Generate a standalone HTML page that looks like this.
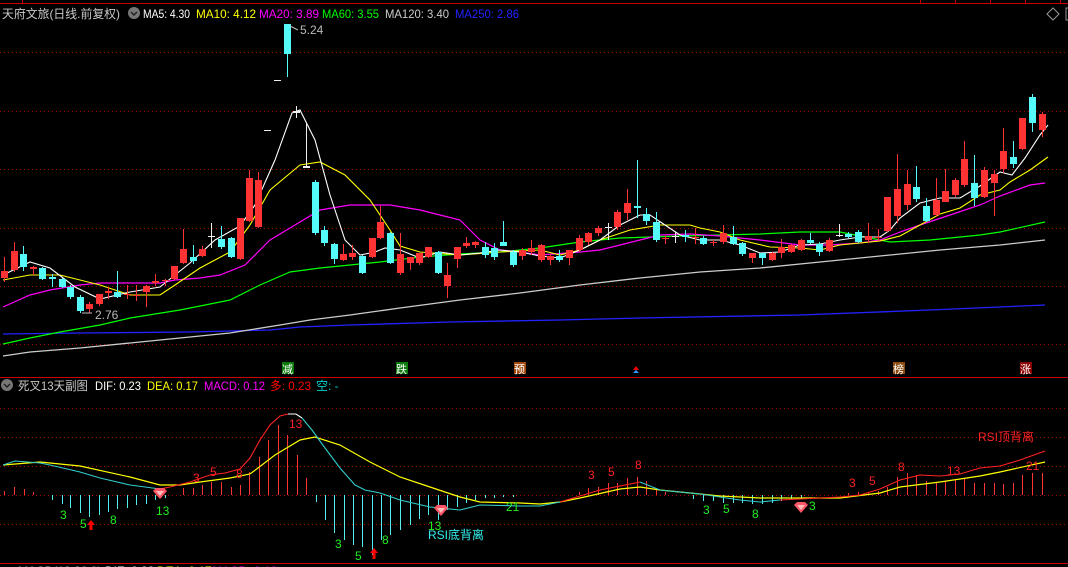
<!DOCTYPE html>
<html><head><meta charset="utf-8"><style>
html,body{margin:0;padding:0;background:#000;width:1068px;height:567px;overflow:hidden}
svg{display:block}
text{font-family:"Liberation Sans","Noto Sans CJK SC",sans-serif;font-size:12px}
</style></head><body>
<svg id="s" width="1068" height="567" viewBox="0 0 1068 567" xmlns="http://www.w3.org/2000/svg">
<rect width="1068" height="567" fill="#000"/>
<g id="grid" stroke="#a00" stroke-width="1" stroke-dasharray="1,3">
<line x1="0" y1="52.5" x2="1068" y2="52.5"/><line x1="0" y1="111.5" x2="1068" y2="111.5"/>
<line x1="0" y1="169.5" x2="1068" y2="169.5"/><line x1="0" y1="228.5" x2="1068" y2="228.5"/>
<line x1="0" y1="286.5" x2="1068" y2="286.5"/><line x1="0" y1="344.5" x2="1068" y2="344.5"/>
<line x1="0" y1="408.5" x2="1068" y2="408.5"/><line x1="0" y1="437.5" x2="1068" y2="437.5"/>
<line x1="0" y1="466.5" x2="1068" y2="466.5"/><line x1="0" y1="495.5" x2="1068" y2="495.5"/>
<line x1="0" y1="524.5" x2="1068" y2="524.5"/>
</g>
<line x1="0" y1="3.5" x2="1068" y2="3.5" stroke="#c00"/>
<g stroke="#c00"><line x1="22.5" y1="0" x2="22.5" y2="3"/><line x1="920.5" y1="0" x2="920.5" y2="3"/><line x1="955.5" y1="0" x2="955.5" y2="3"/><line x1="990.5" y1="0" x2="990.5" y2="3"/><line x1="1025.5" y1="0" x2="1025.5" y2="3"/><line x1="1060.5" y1="0" x2="1060.5" y2="3"/></g>
<line x1="0" y1="377.5" x2="1068" y2="377.5" stroke="#c00"/>
<line x1="0" y1="563.5" x2="1068" y2="563.5" stroke="#c00"/>
<g id="ma"></g>
<g id="candles"></g>
<g id="hist"></g>
<g id="macd"></g>

<text x="2" y="18" fill="#c8c8c8" textLength="118" lengthAdjust="spacingAndGlyphs">天府文旅(日线.前复权)</text>
<circle cx="134" cy="13" r="6" fill="#777"/><path d="M131 12 l3 3 l3 -3" stroke="#222" stroke-width="1.5" fill="none"/>
<text x="143" y="18" fill="#fff" textLength="47" lengthAdjust="spacingAndGlyphs">MA5: 4.30</text>
<text x="196" y="18" fill="#ff0" textLength="60" lengthAdjust="spacingAndGlyphs">MA10: 4.12</text>
<text x="259" y="18" fill="#f0f" textLength="60" lengthAdjust="spacingAndGlyphs">MA20: 3.89</text>
<text x="322" y="18" fill="#0f0" textLength="57" lengthAdjust="spacingAndGlyphs">MA60: 3.55</text>
<text x="385" y="18" fill="#ccc" textLength="64" lengthAdjust="spacingAndGlyphs">MA120: 3.40</text>
<text x="455" y="18" fill="#22f" textLength="64" lengthAdjust="spacingAndGlyphs">MA250: 2.86</text>
<path d="M1053 8 l6 6 l-6 6 l-6 -6z" fill="none" stroke="#999"/>
<rect x="1066" y="8" width="6" height="12" fill="none" stroke="#999"/>

<text x="300" y="34" fill="#bbb">5.24</text><path d="M290 26 l8 4" stroke="#bbb"/>
<text x="95" y="319" fill="#bbb">2.76</text><path d="M82 313 h10" stroke="#bbb"/>

<rect x="282" y="362" width="12" height="12" fill="#0a7a0a"/><text x="282" y="373" fill="#fff" style="font-size:11px">减</text>
<rect x="396" y="362" width="12" height="12" fill="#0a7a0a"/><text x="396" y="373" fill="#fff" style="font-size:11px">跌</text>
<rect x="514" y="362" width="12" height="12" fill="#a04a10"/><text x="514" y="373" fill="#fff" style="font-size:11px">预</text>
<path d="M636 366 l3 4 h-6z" fill="#e00"/><path d="M636 370 l3 3 h-6z" fill="#39f"/>
<rect x="893" y="362" width="12" height="12" fill="#8b4a10"/><text x="893" y="373" fill="#fff" style="font-size:11px">榜</text>
<rect x="1020" y="362" width="12" height="12" fill="#8b0000"/><text x="1020" y="373" fill="#fff" style="font-size:11px">涨</text>

<circle cx="7" cy="385" r="6" fill="#777"/><path d="M4 384 l3 3 l3 -3" stroke="#222" stroke-width="1.5" fill="none"/>
<text x="18" y="390" fill="#c8c8c8" textLength="70" lengthAdjust="spacingAndGlyphs">死叉13天副图</text>
<text x="95" y="390" fill="#fff" textLength="46" lengthAdjust="spacingAndGlyphs">DIF: 0.23</text>
<text x="147" y="390" fill="#ff0" textLength="51" lengthAdjust="spacingAndGlyphs">DEA: 0.17</text>
<text x="204" y="390" fill="#f0f" textLength="61" lengthAdjust="spacingAndGlyphs">MACD: 0.12</text>
<text x="270" y="390" fill="#f00" textLength="41" lengthAdjust="spacingAndGlyphs">多: 0.23</text>
<text x="316" y="390" fill="#0cc">空: -</text>

<g fill="#2e2" style="font-size:12px">
<text x="60" y="519">3</text><text x="80" y="528">5</text><text x="110" y="524">8</text><text x="156" y="515">13</text>
<text x="335" y="548">3</text><text x="355" y="560">5</text><text x="382" y="544">8</text><text x="428" y="530">13</text><text x="506" y="511">21</text>
<text x="703" y="514">3</text><text x="723" y="513">5</text><text x="752" y="518">8</text><text x="809" y="510">3</text>
</g>
<g fill="#f22" style="font-size:12px">
<text x="193" y="482">3</text><text x="210" y="476">5</text><text x="236" y="478">8</text><text x="289" y="428">13</text>
<text x="588" y="479">3</text><text x="608" y="476">5</text><text x="635" y="469">8</text>
<text x="849" y="487">3</text><text x="869" y="485">5</text><text x="898" y="471">8</text><text x="947" y="475">13</text><text x="1026" y="470">21</text>
<text x="978" y="441">RSI顶背离</text>
</g>
<text x="428" y="539" fill="#3ee">RSI底背离</text>
<path d="M91 520 l4 5 h-2.5 v5 h-3 v-5 h-2.5z" fill="#f00"/>
<path d="M374 548 l4 5 h-2.5 v6 h-3 v-6 h-2.5z" fill="#f00"/>
<g id="gems"></g>
<text x="18" y="575" fill="#bbb">MACD(12,26,9)</text><text x="105" y="575" fill="#fff">DIF: 0.23</text><text x="157" y="575" fill="#ff0">DEA: 0.17</text><text x="212" y="575" fill="#f0f">MACD: 0.12</text>
</svg>
<script>
var NS="http://www.w3.org/2000/svg";
function el(p,t,a){var e=document.createElementNS(NS,t);for(var k in a)e.setAttribute(k,a[k]);document.getElementById(p).appendChild(e);return e;}
function pl(p,pts,c,w){var s=[];for(var i=0;i<pts.length;i+=2)s.push(pts[i]+","+pts[i+1]);el(p,"polyline",{points:s.join(" "),fill:"none",stroke:c,"stroke-width":w||1});}
pl("ma",[3,334,80,333,190,332,270,330,300,327,350,325,450,322,560,320,640,318,800,315,930,310,1045,305],"#22f",1.3);
pl("ma",[3,356,30,352,80,348,130,343,180,338,230,333,280,325,310,320,350,315,400,308,460,300,520,293,580,285,640,278,700,272,760,268,820,262,880,256,940,250,1000,245,1045,240],"#ccc",1.3);
pl("ma",[3,344,30,338,60,332,100,325,130,318,180,310,230,300,260,285,290,272,320,268,380,262,420,257,460,254,500,252,540,248,580,242,620,238,680,236,760,234,800,232,840,232,870,238,890,242,930,240,980,235,1000,232,1045,222],"#0f0",1.2);
pl("ma",[3,307,30,295,50,290,80,285,100,283,130,283,160,283,175,280,200,278,220,275,245,265,270,240,295,225,320,210,350,205,390,205,420,210,440,215,460,220,480,240,500,250,520,252,540,255,580,252,600,250,620,245,640,240,660,235,690,234,720,236,760,240,800,245,830,245,860,243,880,240,900,232,920,225,950,215,980,205,1000,196,1030,185,1045,183],"#f0f",1.2);
pl("ma",[3,280,30,275,60,275,100,285,130,295,160,295,175,285,200,268,230,252,250,225,270,190,300,165,320,162,345,175,370,200,390,230,400,246,420,252,460,255,500,252,540,250,560,255,580,250,600,240,630,230,660,225,690,225,700,228,720,232,740,240,770,247,800,248,820,250,840,245,860,243,880,241,900,236,920,225,940,214,960,208,980,195,1000,190,1010,182,1030,170,1048,157],"#ff0",1.1);
pl("ma",[3,275,30,262,50,268,75,287,100,299,130,292,160,287,190,263,215,240,240,226,255,205,275,160,292,113,300,110,315,140,330,195,345,240,360,255,375,252,385,248,400,250,420,258,440,252,460,255,480,253,500,250,520,252,540,256,560,258,580,250,600,240,620,225,640,215,650,215,665,225,680,235,700,240,720,240,740,245,760,253,780,252,800,245,820,244,840,240,860,237,880,237,890,230,900,218,920,203,940,198,960,198,980,186,1000,172,1012,175,1025,158,1040,135,1048,125],"#fff",1.1);
var C=[[4,271,278,257,282,'r'],[14,251,270,242,272,'r'],[23,254,267,246,271,'c'],[33,267,269,266,275,'r'],[42,268,279,267,280,'c'],[52,277,279,274,287,'c'],[62,279,287,278,288,'c'],[70,287,297,285,299,'c'],[80,297,311,295,313,'c'],[89,304,309,302,313,'r'],[99,294,304,294,306,'r'],[108,291,293,287,299,'r'],[117,292,297,271,298,'c'],[127,294,295,285,299,'r'],[136,295,296,285,301,'r'],[146,286,292,285,307,'r'],[155,281,283,274,286,'r'],[165,280,281,279,286,'r'],[174,266,279,266,280,'r'],[183,249,263,229,264,'r'],[193,257,261,245,264,'c'],[202,249,256,246,257,'r'],[211,236,237,223,248,'w'],[221,239,247,226,249,'c'],[231,238,257,237,258,'c'],[240,218,259,218,260,'r'],[249,178,221,170,222,'r'],[258,180,227,172,228,'r'],[267,130,131,130,131,'w'],[277,80,81,80,81,'w'],[287,24,54,24,77,'c'],[296,111,113,106,118,'w'],[306,166,168,122,168,'w'],[315,182,233,180,235,'c'],[324,230,243,226,246,'c'],[334,244,259,243,264,'c'],[343,254,260,244,261,'r'],[352,253,257,245,260,'r'],[362,256,273,255,274,'c'],[372,238,257,238,258,'r'],[380,222,238,206,239,'r'],[390,233,263,232,264,'c'],[400,254,273,233,275,'r'],[410,257,263,257,270,'r'],[419,253,263,253,265,'r'],[428,247,257,247,258,'r'],[438,252,273,251,274,'c'],[447,275,286,263,298,'r'],[457,247,259,247,268,'r'],[466,243,246,237,248,'r'],[475,242,245,241,248,'r'],[485,247,255,242,258,'c'],[494,248,257,243,260,'c'],[503,242,246,221,246,'c'],[513,252,265,250,267,'c'],[522,250,256,248,260,'r'],[531,248,252,240,255,'r'],[541,245,260,244,262,'r'],[550,256,260,254,265,'r'],[559,256,260,250,262,'c'],[569,250,258,250,265,'r'],[579,238,250,235,252,'r'],[588,233,242,232,245,'r'],[598,228,233,226,236,'r'],[608,227,228,223,240,'w'],[617,212,227,210,230,'r'],[627,203,213,189,220,'r'],[637,206,208,160,218,'c'],[646,214,221,208,225,'c'],[656,222,240,212,242,'c'],[665,238,239,236,244,'r'],[675,236,237,232,243,'w'],[685,235,237,230,242,'c'],[695,237,238,228,244,'r'],[703,238,244,236,245,'c'],[713,242,243,240,246,'r'],[723,233,242,225,244,'r'],[733,237,244,226,245,'c'],[742,243,254,242,256,'c'],[752,253,258,253,263,'r'],[762,253,258,253,265,'c'],[772,253,260,252,261,'r'],[781,247,253,239,258,'r'],[791,245,252,244,253,'r'],[801,240,250,239,251,'r'],[810,240,243,233,244,'c'],[819,244,252,242,256,'c'],[829,240,251,238,252,'r'],[839,235,236,224,237,'w'],[848,234,237,232,238,'c'],[858,232,242,230,243,'c'],[868,236,240,223,243,'r'],[878,237,238,229,241,'r'],[887,197,231,197,232,'r'],[897,189,216,154,223,'r'],[907,184,205,170,210,'r'],[916,187,199,166,202,'c'],[926,206,221,198,222,'c'],[936,200,215,178,217,'r'],[945,191,202,169,202,'r'],[955,180,195,178,197,'r'],[964,159,185,141,187,'r'],[974,183,198,155,206,'c'],[984,170,197,167,198,'r'],[994,174,183,170,216,'r'],[1003,151,169,128,173,'r'],[1013,157,164,141,168,'c'],[1022,118,149,118,150,'r'],[1032,97,123,94,132,'c'],[1042,114,130,112,137,'r']];
var col={r:'#ff3333',c:'#55fbfb',w:'#eee'};
C.forEach(function(k){var c=col[k[5]];el("candles","line",{x1:k[0]+.5,y1:k[3],x2:k[0]+.5,y2:k[4],stroke:c});var h=Math.max(1,k[2]-k[1]);el("candles","rect",{x:k[0]-3,y:k[1],width:7,height:h,fill:c});});
var Z=495;
function bar(x,h,c){el("hist","line",{x1:x+.5,y1:Z,x2:x+.5,y2:Z-h,stroke:c});}
[[4,4],[14,8],[24,6],[33,3]].forEach(function(b){bar(b[0],b[1],'#f33')});
[[52,-5],[62,-9],[70,-13],[80,-18],[89,-22],[99,-20],[108,-17],[117,-14],[127,-13],[136,-10],[146,-9],[155,-5],[165,-3]].forEach(function(b){bar(b[0],b[1],'#5ee')});
[[183,7],[193,7],[202,10],[211,13],[221,13],[231,8],[240,10],[249,23],[259,38],[268,55],[278,70],[287,60],[297,40],[306,17]].forEach(function(b){bar(b[0],b[1],'#f33')});
[[316,-7],[325,-25],[334,-38],[344,-45],[353,-50],[362,-52],[372,-60],[381,-45],[390,-40],[400,-35],[410,-30],[419,-24],[428,-20],[438,-25],[447,-15],[457,-12],[466,-8],[475,-5],[485,-3],[494,-3],[503,-2],[513,-2]].forEach(function(b){bar(b[0],b[1],'#5ee')});
[[579,3],[588,7],[598,8],[608,12],[617,12],[627,17],[637,18],[646,14],[656,5],[665,3]].forEach(function(b){bar(b[0],b[1],'#f33')});
[[693,-4],[703,-6],[713,-6],[723,-8],[733,-8],[742,-8],[752,-9],[762,-9],[772,-8],[781,-6],[791,-4],[801,-3]].forEach(function(b){bar(b[0],b[1],'#5ee')});
[[848,2],[858,3],[868,3],[878,4],[887,8],[897,18],[907,22],[916,20],[926,14],[936,13],[945,14],[955,15],[964,16],[974,12],[984,12],[994,12],[1003,11],[1013,12],[1022,20],[1032,22],[1042,22]].forEach(function(b){bar(b[0],b[1],'#f33')});
pl("macd",[3,465,40,462,80,466,130,477,160,485,180,485,200,482,230,478,250,474,275,455,300,440,315,437,340,445,370,462,400,477,430,487,460,497,480,502,520,503,540,504,560,502,580,498,620,489,640,487,660,490,700,494,720,496,760,498,800,498,840,498,880,493,900,487,940,482,980,476,1000,472,1045,462],"#ff0",1.2);
pl("macd",[3,465,15,461,40,463,50,465,80,472,100,478,130,485,160,489],"#3cc",1.1);
pl("macd",[160,489,170,487,190,482,210,475,225,473,240,469,250,458,260,440,270,425,280,416,288,414],"#f22",1.1);
pl("macd",[288,414,296,414,302,418],"#fff",1.1);
pl("macd",[302,418,312,430,325,448,340,468,355,485,365,490,380,493,400,500,430,507,460,510,480,505,520,506,540,506,560,502],"#3cc",1.1);
pl("macd",[560,502,580,496,600,490,640,482],"#f22",1.1);
pl("macd",[640,482,660,490,680,492,700,494,720,497,740,500,760,502,780,500],"#3cc",1.1);
pl("macd",[780,500,800,499,840,497,860,495,880,489,900,480,920,475,940,476,960,474,980,468,1000,466,1020,460,1045,451],"#f22",1.1);
[[160,494],[441,511],[801,508]].forEach(function(g){var x=g[0],y=g[1];el("gems","path",{d:"M"+(x-7)+" "+(y-3)+" l3 -3 h8 l3 3 l-7 8z",fill:"#f56"});el("gems","path",{d:"M"+(x-4)+" "+(y-3)+" h8 l-4 5z",fill:"#fbb"});});
</script>
</body></html>
